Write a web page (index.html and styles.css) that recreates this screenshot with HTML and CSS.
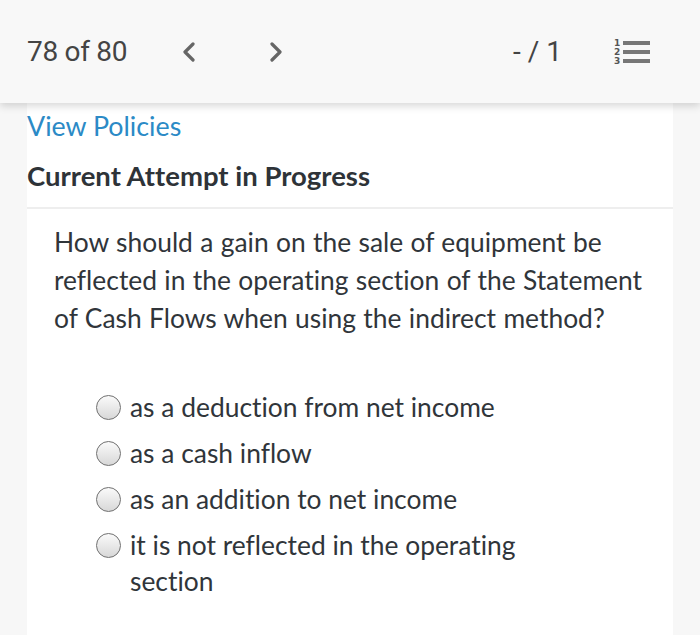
FILE: index.html
```html
<!DOCTYPE html>
<html lang="en">
<head>
<meta charset="utf-8">
<title>Question 78 of 80</title>
<link rel="stylesheet" href="styles.css">
</head>
<body>
<header class="topbar">
  <div class="topbar-left">
    <span class="counter">78 of 80</span>
    <button class="nav-btn" aria-label="Previous">
      <svg width="14" height="20" viewBox="0 0 14 20"><path d="M11 2 L3 10 L11 18" fill="none" stroke="#666" stroke-width="3.2" stroke-linecap="round" stroke-linejoin="round"/></svg>
    </button>
    <button class="nav-btn" aria-label="Next">
      <svg width="14" height="20" viewBox="0 0 14 20"><path d="M3 2 L11 10 L3 18" fill="none" stroke="#666" stroke-width="3.2" stroke-linecap="round" stroke-linejoin="round"/></svg>
    </button>
  </div>
  <div class="topbar-right">
    <span class="score">- / 1</span>
    <span class="list-icon" aria-label="Question list">
      <span class="list-row"><span class="num">1</span><span class="bar"></span></span>
      <span class="list-row"><span class="num">2</span><span class="bar"></span></span>
      <span class="list-row"><span class="num">3</span><span class="bar"></span></span>
    </span>
  </div>
</header>
<main class="panel">
  <section class="intro">
    <a class="policies" href="#">View Policies</a>
    <h2 class="attempt">Current Attempt in Progress</h2>
  </section>
  <section class="question">
    <p class="prompt">How should a gain on the sale of equipment be reflected in the operating section of the Statement of Cash Flows when using the indirect method?</p>
    <ul class="options">
      <li class="option"><span class="radio"></span><span class="label">as a deduction from net income</span></li>
      <li class="option"><span class="radio"></span><span class="label">as a cash inflow</span></li>
      <li class="option"><span class="radio"></span><span class="label">as an addition to net income</span></li>
      <li class="option"><span class="radio"></span><span class="label">it is not reflected in the operating section</span></li>
    </ul>
  </section>
</main>
</body>
</html>
```

FILE: styles.css
```css
* { box-sizing: border-box; }
html, body { margin: 0; padding: 0; }
body {
  background: #f7f7f7;
  font-family: Lato, "Open Sans", sans-serif;
  font-variant-ligatures: none;
  width: 700px;
  height: 635px;
  overflow: hidden;
}
.topbar {
  position: relative;
  z-index: 2;
  height: 103px;
  background: #f8f8f8;
  box-shadow: 0 3px 8px rgba(0,0,0,0.16);
  display: flex;
  align-items: center;
  justify-content: space-between;
  padding: 0 50px 0 27px;
}
.topbar-left { display: flex; align-items: center; }
.counter {
  font-family: Roboto, sans-serif;
  font-size: 28px;
  color: #444;
  letter-spacing: -0.3px;
  margin-right: 55px;
}
.nav-btn {
  border: 0;
  background: none;
  padding: 0;
  width: 14px;
  height: 20px;
  margin-right: 73px;
  display: flex;
}
.topbar-right { display: flex; align-items: center; }
.score {
  font-family: Roboto, sans-serif;
  font-size: 28px;
  color: #444;
  margin-right: 52px;
}
.list-icon { display: flex; flex-direction: column; gap: 3px; }
.list-row { display: flex; align-items: center; gap: 3px; height: 6px; }
.num {
  font-family: "DejaVu Sans", sans-serif;
  font-size: 9px;
  font-weight: bold;
  color: #555;
  width: 6px;
  line-height: 6px;
}
.bar { width: 27px; height: 4px; background: #777; }
.panel {
  margin: 0 27px;
  width: 646px;
  background: #fff;
  min-height: 532px;
}
.intro {
  padding: 8px 0 16px;
  border-bottom: 2px solid #eeeeee;
}
.policies {
  display: block;
  font-size: 26.8px;
  line-height: 30px;
  color: #2b8ac6;
  text-decoration: none;
}
.attempt {
  margin: 20px 0 0;
  font-size: 27.5px;
  line-height: 30px;
  font-weight: bold;
  color: #2e3338;
}
.question { padding: 14px 27px 0; }
.prompt {
  margin: 0;
  font-size: 26.4px;
  line-height: 38px;
  color: #30353a;
  word-spacing: 0.6px;
}
.options {
  list-style: none;
  margin: 52px 0 0 43px;
  padding: 0;
  display: flex;
  flex-direction: column;
  gap: 10px;
  max-width: 440px;
}
.option {
  display: flex;
  align-items: flex-start;
  font-size: 26.4px;
  line-height: 36px;
  color: #30353a;
}
.radio {
  flex: 0 0 auto;
  width: 25px;
  height: 25px;
  margin: 6px 9px 0 -1px;
  border-radius: 50%;
  border: 1.6px solid #707070;
  background: linear-gradient(#fafafa, #d8d8d8);
}
```
